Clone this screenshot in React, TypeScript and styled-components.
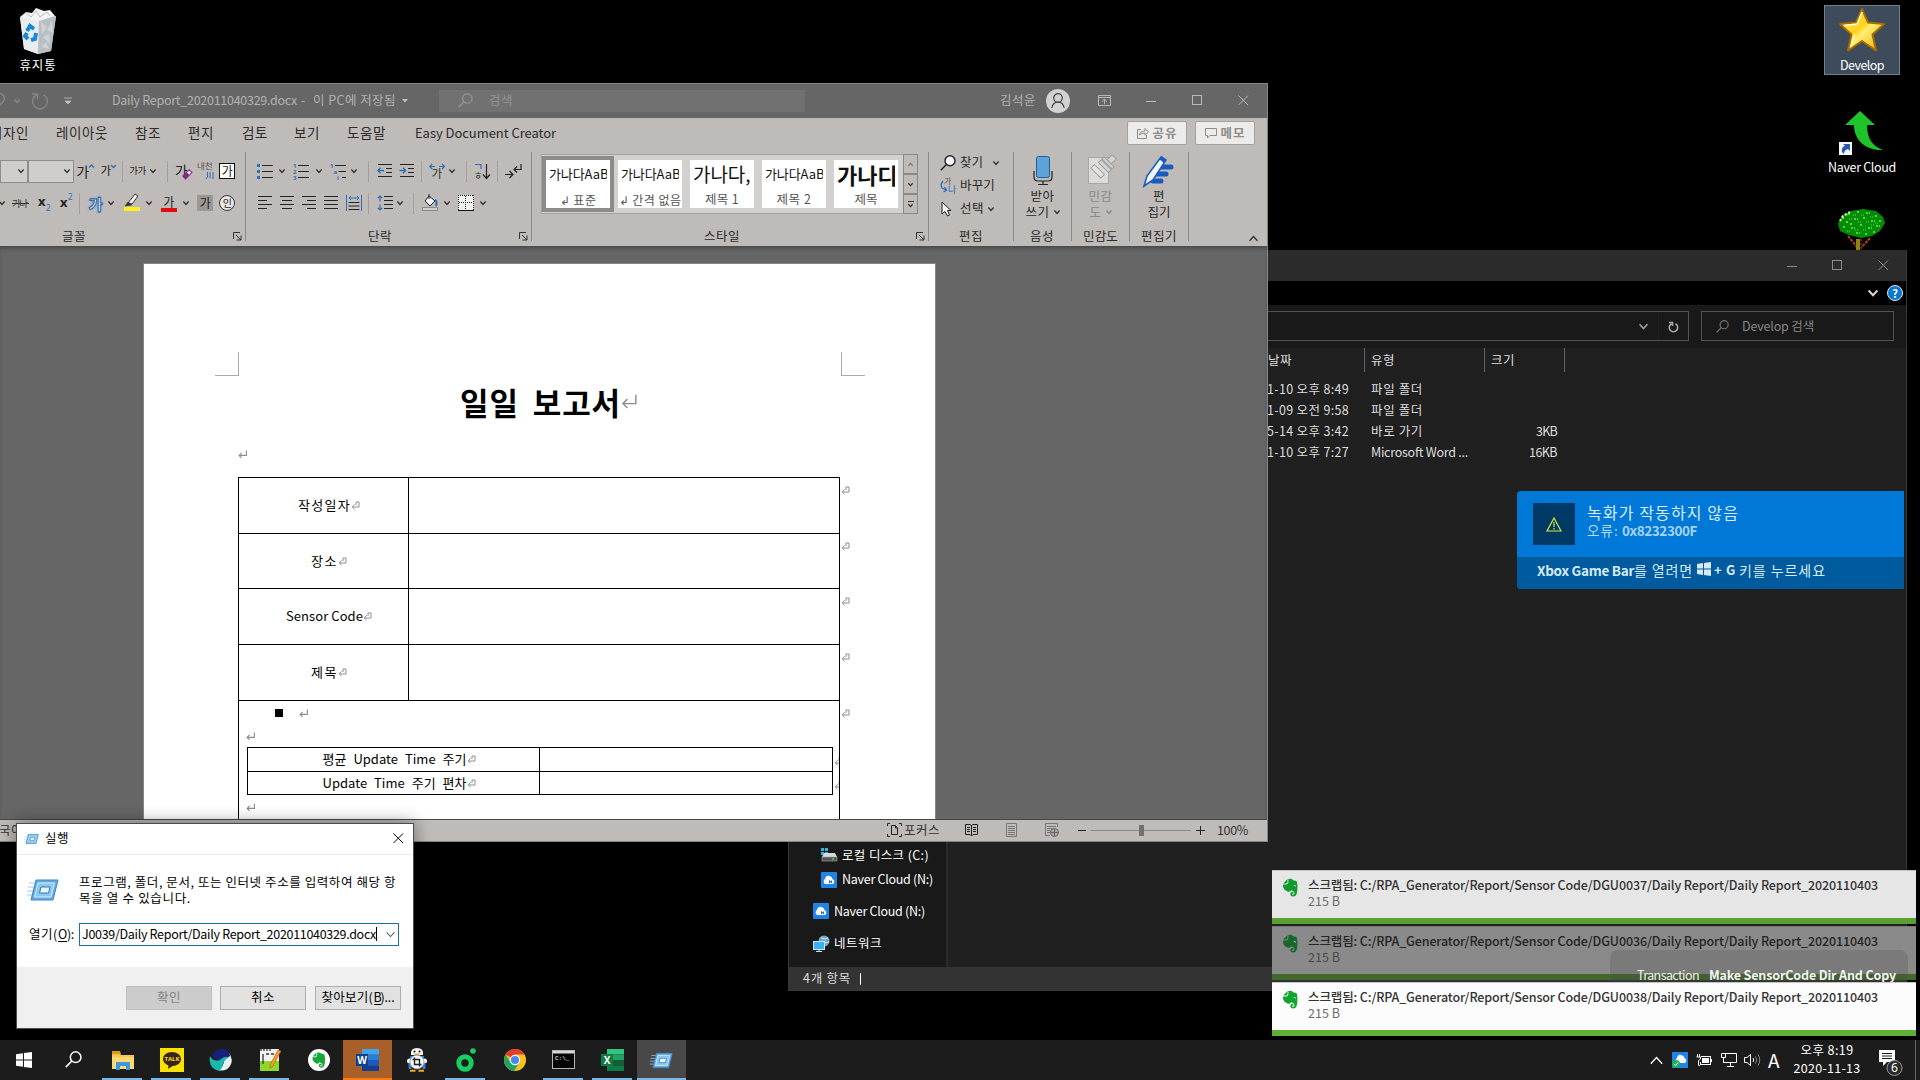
import React, { useLayoutEffect, useRef, useState } from "react";
import styled, { createGlobalStyle } from "styled-components";

const Global = createGlobalStyle`
  * { box-sizing: border-box; }
  body { margin: 0; background: #000; overflow: hidden; }
  svg { display: block; flex: none; overflow: visible; }
`;

/* ---------- text ---------- */

type TextProps = { $size?: number; $color?: string; $weight?: number; $w?: number; $gap?: number; $word?: number };

const Text = styled.span<TextProps>`
  display: block;
  flex: none;
  white-space: pre;
  line-height: 1.15;
  font-family: "Noto Sans CJK KR", "Noto Sans", sans-serif;
  font-size: ${(p) => p.$size ?? 12.5}px;
  font-weight: ${(p) => p.$weight ?? 400};
  color: ${(p) => p.$color ?? "inherit"};
  width: ${(p) => (p.$w ? `${p.$w}px` : "auto")};
  margin-left: ${(p) => p.$gap ?? 0}px;
  word-spacing: ${(p) => p.$word ?? 0}px;
`;

type LabelProps = { children: string; w?: number; size?: number; color?: string; bold?: boolean; medium?: boolean; gap?: number; word?: number };

/* A single line whose tracking is computed so that it fills the given width. */
function Label({ children, w, size, color, bold, medium, gap, word }: LabelProps) {
  const ref = useRef<HTMLSpanElement>(null);
  const [track, setTrack] = useState(0);
  useLayoutEffect(() => {
    if (!w || !ref.current) return;
    const range = document.createRange();
    range.selectNodeContents(ref.current);
    const natural = range.getBoundingClientRect().width;
    setTrack((w - natural) / Math.max(1, children.length));
  }, []);
  const weight = bold ? 700 : medium ? 500 : 400;
  return (
    <Text ref={ref} $w={w} $size={size} $color={color} $weight={weight} $gap={gap} $word={word} style={{ letterSpacing: track }}>
      {children}
    </Text>
  );
}

const Slot = styled.div<{ $w: number; $gap?: number; $lift?: number }>`
  width: ${(p) => p.$w}px;
  margin-left: ${(p) => p.$gap ?? 0}px;
  padding-bottom: ${(p) => p.$lift ?? 0}px;
  flex: none;
  display: flex;
  align-items: center;
  justify-content: center;
`;

/* ---------- desktop ---------- */

const Desktop = styled.div`
  position: relative;
  width: 1920px;
  height: 1080px;
  background: #000;
  overflow: hidden;
  font-family: "Noto Sans CJK KR", "Noto Sans", sans-serif;
`;

const Shortcut = styled.div<{ $x: number; $y: number; $selected?: boolean }>`
  position: absolute;
  left: ${(p) => p.$x}px;
  top: ${(p) => p.$y}px;
  width: 76px;
  height: 70px;
  display: flex;
  flex-direction: column;
  align-items: center;
  color: #fff;
  background: ${(p) => (p.$selected ? "#3d4b5b" : "transparent")};
  border: 1px ${(p) => (p.$selected ? "solid #75808c" : "solid transparent")};
`;
const ShortcutArt = styled.div`
  height: 50px;
  display: flex;
  align-items: flex-start;
  margin-bottom: 2px;
`;

const Bin = () => (
  <svg width="40" height="48" viewBox="0 -2 40 48">
    <path d="M2 9L38 8L33 43L20 46L6 41Z" fill="#d3d7da" />
    <path d="M2 9L21 12L20 46L6 41Z" fill="#e9ecee" />
    <path d="M21 12L38 8L33 43L20 46Z" fill="#b9bec2" />
    <path d="M23 14l6 5-5 7zM34 13l-5 9 6 3zM25 29l6-3 1 10zM23 39l5-5 3 7z" fill="#cfd3d6" />
    <path d="M2 9L8 4L14 5L18 0L26 3L32 2L37 8L21 13Z" fill="#f4f4f4" />
    <path d="M8 5l5 4 5-6 4 6 7-5 3 4" stroke="#b9bdc0" fill="none" />
    <g stroke="#1787d8" strokeWidth="4" fill="none">
      <path d="M9 23L12 18L16 21" />
      <path d="M18 25L17 31L13 32" />
      <path d="M10 31L7 28L9 25" />
    </g>
  </svg>
);

const StarArt = () => (
  <svg width="48" height="48" viewBox="-1 0 48 48">
    <defs>
      <linearGradient id="gold" x1="0" y1="0" x2="1" y2="1">
        <stop offset="0" stopColor="#fff27a" />
        <stop offset=".45" stopColor="#ffd21c" />
        <stop offset=".55" stopColor="#ffee70" />
        <stop offset="1" stopColor="#e9a500" />
      </linearGradient>
    </defs>
    <path d="M23 3L29 16.5L45 18L33.5 28.5L37 44.5L23 35L9 44.5L12.5 28.5L1 18L17 16.5Z" fill="url(#gold)" stroke="#a86c00" strokeWidth="2" strokeLinejoin="round" />
    <path d="M23 6L18 18L5 19.5M12 41l3.5-13" stroke="#fffbd0" fill="none" strokeWidth="1.5" />
  </svg>
);

const NaverArrow = () => (
  <svg width="46" height="48" viewBox="0 0 46 48">
    <path d="M21 3L36 17H28C28 30 33 38 44 42C28 43 15 33 15 17H6Z" fill="#1fc32a" />
    <rect x="0" y="34" width="13" height="13" fill="#f5f7fa" />
    <path d="M4 36H11V43L9 41Q5 42 5 46L3 44Q2 39 6 38Z" fill="#2a5ba8" />
  </svg>
);

const TreeArt = () => (
  <svg width="48" height="46" viewBox="0 0 48 46">
    <path d="M1 15L5 6L14 2L26 0L39 2L46 8L48 14L43 22L35 27L24 29L12 26L3 22Z" fill="#078a07" />
    <path d="M5 9h3M11 5h3M20 3h3M29 4h4M38 7h3M9 13h3M17 10h4M26 9h3M34 12h4M42 12h3M6 18h3M14 19h4M23 16h3M31 19h4M39 17h4M19 24h4M28 25h3M13 15h2M36 23h3" stroke="#35e635" strokeWidth="2" strokeDasharray="2 1" />
    <path d="M8 6h3M16 6h3M24 6h3M33 8h3M12 10h3M21 13h3M29 13h3M38 14h3M10 22h3M18 21h3M26 21h3M34 16h3" stroke="#1cc01c" strokeWidth="2" strokeDasharray="1 1" />
    <path d="M3 12L6 7L13 3" stroke="#f5f5c0" strokeWidth="2" strokeDasharray="2 2" fill="none" />
    <path d="M11 27L20 38M33 29L24 39" stroke="#a04a1a" strokeWidth="2" strokeDasharray="3 1" />
    <rect x="19" y="30" width="4" height="16" fill="#8a8410" />
    <path d="M24 30V46" stroke="#7b1616" strokeWidth="2" strokeDasharray="2 2" />
  </svg>
);

/* ---------- shared glyphs ---------- */

const Chevron = ({ c = "#333", s = 6, w = 1.4 }: { c?: string; s?: number; w?: number }) => (
  <svg width={s} height={s} viewBox="0 0 8 8">
    <path d="M0.5 2L4 5.8L7.5 2" fill="none" stroke={c} strokeWidth={(w * 8) / s} />
  </svg>
);
const ChevronUp = ({ c = "#333", s = 9, w = 1.4 }: { c?: string; s?: number; w?: number }) => (
  <svg width={s} height={s} viewBox="0 0 8 8">
    <path d="M0.5 6L4 2.2L7.5 6" fill="none" stroke={c} strokeWidth={(w * 8) / s} />
  </svg>
);
const Minimize = ({ c }: { c: string }) => (
  <svg width="10" height="10"><path d="M0 5.5H10" stroke={c} /></svg>
);
const Maximize = ({ c }: { c: string }) => (
  <svg width="11" height="11"><rect x=".5" y=".5" width="9" height="9" fill="none" stroke={c} /></svg>
);
const Close = ({ c }: { c: string }) => (
  <svg width="11" height="11"><path d="M.5 .5L10 10M10 .5L.5 10" stroke={c} /></svg>
);
const Lens = ({ c, s, fill = "none" }: { c: string; s: number; fill?: string }) => (
  <svg width={s} height={s} viewBox="0 0 16 16">
    <circle cx="10" cy="5.8" r="5" fill={fill} stroke={c} strokeWidth="1.4" />
    <path d="M6.4 9.4L.8 15.2" stroke={c} strokeWidth="1.5" />
  </svg>
);

/* ---------- Word ---------- */

const WordWindow = styled.div`
  position: absolute;
  left: 0;
  top: 83px;
  width: 1268px;
  height: 759px;
  display: flex;
  flex-direction: column;
  border-top: 1px solid #858585;
  border-right: 1px solid #858585;
  border-bottom: 1px solid #858585;
  background: #666;
  overflow: hidden;
`;
const TitleBar = styled.div`
  height: 34px;
  flex: none;
  display: flex;
  align-items: center;
  color: #b2b2b2;
  padding-bottom: 1px;
`;
const SearchBox = styled.div`
  width: 366px;
  height: 22px;
  margin-left: 31px;
  padding-left: 19px;
  display: flex;
  align-items: center;
  background: #717171;
  flex: none;
`;
const Avatar = styled.div`
  width: 24px;
  height: 24px;
  border-radius: 12px;
  background: #d2d2d2;
  margin-left: 10px;
  display: flex;
  align-items: center;
  justify-content: center;
  flex: none;
`;
const Tabs = styled.div`
  height: 30px;
  flex: none;
  display: flex;
  align-items: center;
  background: #bfbbb8;
  color: #2c2b2a;
`;
const TabButton = styled.div<{ $gap: number }>`
  width: 60px;
  height: 24px;
  margin: 0 0 0 ${(p) => p.$gap}px;
  border: 1px solid #a3a19f;
  border-radius: 2px;
  background: #ecebea;
  color: #8e8c8a;
  display: flex;
  align-items: center;
  justify-content: center;
  gap: 4px;
  flex: none;
`;
const Ribbon = styled.div`
  height: 98px;
  flex: none;
  display: flex;
  background: #bfbbb8;
  color: #2a2928;
`;
const Group = styled.div<{ $w: number }>`
  width: ${(p) => p.$w}px;
  flex: none;
  display: flex;
  flex-direction: column;
  padding-top: 7px;
`;
const GroupRule = styled.div`
  width: 1px;
  height: 89px;
  margin-top: 4px;
  background: #8b8987;
  flex: none;
`;
const ToolRow = styled.div`
  height: 32px;
  display: flex;
  align-items: center;
  flex: none;
`;
const GroupFoot = styled.div<{ $pad: number }>`
  height: 20px;
  margin-top: 7px;
  padding: 0 3px 0 ${(p) => p.$pad}px;
  display: flex;
  align-items: center;
  justify-content: space-between;
`;
const ToolRule = styled.div<{ $gap: number }>`
  width: 1px;
  height: 21px;
  margin-left: ${(p) => p.$gap}px;
  background: #a19f9c;
  flex: none;
`;
const Combo = styled.div<{ $w: number }>`
  width: ${(p) => p.$w}px;
  height: 23px;
  border: 1px solid #8f8d8b;
  background: #cfcecd;
  display: flex;
  align-items: center;
  justify-content: flex-end;
  padding-right: 3px;
  flex: none;
`;
const Glyph = styled.span<{ $size?: number; $color?: string; $bold?: boolean }>`
  font-size: ${(p) => p.$size ?? 14}px;
  line-height: 1;
  color: ${(p) => p.$color ?? "#222"};
  font-weight: ${(p) => (p.$bold ? 700 : 400)};
  white-space: nowrap;
  letter-spacing: -0.5px;
`;
const Boxed = styled.div<{ $round?: boolean; $fill: string; $line: string }>`
  width: 16px;
  height: 16px;
  border: 1px solid ${(p) => p.$line};
  border-radius: ${(p) => (p.$round ? "8px" : "0")};
  background: ${(p) => p.$fill};
  display: flex;
  align-items: center;
  justify-content: center;
  flex: none;
`;
const Swatch = styled.div<{ $c: string }>`
  display: flex;
  flex-direction: column;
  align-items: center;
  width: 16px;
  height: 18px;
  justify-content: flex-end;
  border-bottom: 4px solid ${(p) => p.$c};
`;
const Glow = styled(Glyph)`
  color: #eaf3fb;
  font-weight: 700;
  -webkit-text-stroke: 0.8px #1c5596;
  text-shadow: 0 0 2px #3f8ad6, 0 0 3px #3f8ad6;
`;

const Launcher = () => (
  <svg width="9" height="9"><path d="M.5 7V.5H7M3 3L8 8M8 3.5V8H3.5" fill="none" stroke="#333" /></svg>
);
const INK = "#222";
const BLUE = "#2e6db8";

const Lines = ({ rows }: { rows: [number, number][] }) => (
  <svg width="16" height="16">
    {rows.map(([a, b], i) => (
      <path key={i} d={`M${a} ${1.5 + i * 4}H${b}`} stroke={INK} />
    ))}
  </svg>
);
const ListIcon = ({ kind }: { kind: "dot" | "num" | "multi" }) => (
  <svg width="16" height="17" fontSize="6" fontFamily="Noto Sans" fill={BLUE} fontWeight="700">
    {kind === "dot" && [1, 7, 13].map((y) => <rect key={y} x="0" y={y} width="3" height="3" />)}
    {kind === "num" && ["1", "2", "3"].map((t, i) => <text key={t} x="0" y={5 + i * 6}>{t}</text>)}
    {kind === "multi" && ["1", "a", "i"].map((t, i) => <text key={t} x={i * 3.5} y={5 + i * 6}>{t}</text>)}
    {[2.5, 8.5, 14.5].map((y, i) => (
      <path key={y} d={`M${kind === "multi" ? 5 + i * 3.5 : 5} ${y}H16`} stroke={INK} />
    ))}
  </svg>
);
const Indent = ({ out }: { out?: boolean }) => (
  <svg width="16" height="15">
    <path d="M1 1.5H15M9 5.5H15M9 9.5H15M1 13.5H15" stroke={INK} />
    <path d={out ? "M7 7.5H.8M3.5 4.8L.8 7.5L3.5 10.2" : "M.5 7.5H6.7M4 4.8L6.7 7.5L4 10.2"} stroke={BLUE} fill="none" strokeWidth="1.3" />
  </svg>
);

const Gallery = styled.div`
  width: 362px;
  height: 60px;
  margin-left: 9px;
  display: flex;
  align-items: center;
  background: #d2d1d0;
  border: 1px solid #a5a3a1;
  border-right: 0;
  flex: none;
`;
const StyleTile = styled.div<{ $on?: boolean }>`
  width: 72px;
  height: 56px;
  flex: none;
  border: 4px solid ${(p) => (p.$on ? "#8d8b89" : "transparent")};
  background: #fff;
  background-clip: padding-box;
  display: flex;
  flex-direction: column;
  align-items: center;
  justify-content: space-between;
  overflow: hidden;
`;
const Sample = styled.div<{ $size: number; $bold?: boolean }>`
  height: 31px;
  width: 58px;
  overflow: hidden;
  white-space: nowrap;
  font-size: ${(p) => p.$size}px;
  font-weight: ${(p) => (p.$bold ? 700 : 400)};
  line-height: 28px;
  letter-spacing: -0.1px;
  color: #111;
`;
const StyleName = styled.div`
  height: 17px;
  display: flex;
  align-items: center;
  color: #555;
`;
const Scroller = styled.div`
  width: 15px;
  height: 60px;
  display: flex;
  flex-direction: column;
  flex: none;
`;
const ScrollCell = styled.div`
  flex: 1;
  border: 1px solid #8a8886;
  display: flex;
  flex-direction: column;
  align-items: center;
  justify-content: center;
`;
const GalleryRow = styled.div`
  height: 65px;
  margin-top: -1px;
  padding-bottom: 5px;
  display: flex;
  align-items: center;
  flex: none;
`;
const EditLine = styled.div`
  height: 23px;
  display: flex;
  align-items: center;
  padding-left: 11px;
  flex: none;
`;
const EditStack = styled.div`
  height: 64px;
  margin-top: -4px;
  margin-bottom: 4px;
  flex: none;
`;
const BigTool = styled.div<{ $dim?: boolean }>`
  height: 64px;
  padding-top: 1px;
  display: flex;
  flex-direction: column;
  align-items: center;
  flex: none;
  color: ${(p) => (p.$dim ? "#8b8987" : "#2a2928")};
`;
const BigArt = styled.div`
  height: 32px;
  display: flex;
  align-items: flex-start;
  flex: none;
`;
const BigLine = styled.div`
  height: 16px;
  display: flex;
  align-items: center;
  gap: 4px;
  flex: none;
`;
const Collapse = styled.div`
  margin-left: auto;
  padding: 86px 9px 0 0;
`;

/* document */
const Canvas = styled.div`
  flex: 1;
  min-height: 0;
  overflow: hidden;
  background: #666;
  box-shadow: inset 0 4px 4px -2px #444;
  padding: 17px 0 0 143px;
`;
const Page = styled.div`
  width: 793px;
  height: 900px;
  background: #fff;
  border: 1px solid #868686;
`;
const Corners = styled.div`
  display: flex;
  justify-content: space-between;
  padding: 88px 70px 0 71px;
`;
const Corner = styled.div<{ $right?: boolean }>`
  width: 24px;
  height: 24px;
  border-bottom: 1px solid #aaa;
  border-right: ${(p) => (p.$right ? "0" : "1px solid #aaa")};
  border-left: ${(p) => (p.$right ? "1px solid #aaa" : "0")};
`;
const TitleLine = styled.div`
  height: 54px;
  padding: 0 0 3px 316px;
  display: flex;
  align-items: center;
`;
const ParaLine = styled.div<{ $h: number; $pad: number; $drop?: number }>`
  height: ${(p) => p.$h}px;
  padding-left: ${(p) => p.$pad}px;
  padding-top: ${(p) => p.$drop ?? 0}px;
  display: flex;
  align-items: center;
`;
const FormRow = styled.div<{ $h: number; $pad?: number }>`
  height: ${(p) => p.$h}px;
  margin-left: ${(p) => p.$pad ?? 94}px;
  display: flex;
`;
const FormCell = styled.div<{ $w: number; $last?: boolean }>`
  width: ${(p) => p.$w}px;
  border-left: 1px solid #000;
  border-top: 1px solid #000;
  border-bottom: ${(p) => (p.$last ? "1px solid #000" : "0")};
  padding-left: 11px;
  display: flex;
  align-items: center;
  justify-content: center;
  flex: none;
`;
const RowEnd = styled.div<{ $top: number; $w?: number }>`
  border-left: 1px solid #000;
  width: ${(p) => p.$w ?? 20}px;
  overflow: hidden;
  padding: ${(p) => p.$top}px 0 0 1px;
`;
const FormBody = styled.div`
  width: 601px;
  height: 200px;
  border-left: 1px solid #000;
  border-top: 1px solid #000;
  flex: none;
`;
const Square = styled.div`
  width: 8px;
  height: 8px;
  background: #000;
  margin-right: 16px;
`;
const Return = ({ s = 9 }: { s?: number }) => (
  <svg width={s} height={s} viewBox="0 0 10 10">
    <path d="M9.3 .5V6H1.2M4 3.2L1.2 6L4 8.8" fill="none" stroke="#8c8c8c" strokeWidth={s > 12 ? 0.9 : 1.2} />
  </svg>
);
const CellMark = () => (
  <svg width="9" height="9" viewBox="0 0 9 9">
    <path d="M5 1H8V6H1.2M3.6 3.4L1.2 5.8L3.6 8.2M5 1V4" fill="none" stroke="#8e8e8e" />
  </svg>
);

const StatusBar = styled.div`
  height: 22px;
  flex: none;
  display: flex;
  align-items: center;
  background: #bfbbb8;
  border-top: 1px solid #484848;
  color: #333;
  padding-bottom: 1px;
`;
const ZoomTrack = styled.div`
  width: 100px;
  height: 11px;
  margin: 0 5px;
  display: flex;
  justify-content: center;
  background: linear-gradient(#8a8886, #8a8886) center / 100% 1px no-repeat;
`;
const ZoomThumb = styled.div`
  width: 5px;
  height: 11px;
  background: #737170;
`;

const formRows = [
  { name: "작성일자", w: 53, h: 56 },
  { name: "장소", w: 27, h: 55 },
  { name: "Sensor Code", w: 77, h: 56 },
  { name: "제목", w: 27, h: 56 },
];
const innerRows = ["평균 Update Time 주기", "Update Time 주기 편차"];

function Word() {
  return (
    <WordWindow>
      <TitleBar>
        <Slot $w={7}>
          <svg width="12" height="18"><path d="M-4 3C2 -2 9 4 5 10L-3 17" fill="none" stroke="#8a8a8a" strokeWidth="1.3" /></svg>
        </Slot>
        <Slot $w={8} $gap={6}><Chevron c="#8a8a8a" /></Slot>
        <Slot $w={18} $gap={10}>
          <svg width="18" height="18"><path d="M12.5 2.8A7.5 7.5 0 1 1 5.5 2.8M1 2H6.5V7.5" fill="none" stroke="#858585" strokeWidth="1.4" /></svg>
        </Slot>
        <Slot $w={10} $gap={14}>
          <svg width="8" height="8"><path d="M0 1H8M1 4L4 7L7 4Z" stroke="#c0c0c0" fill="#c0c0c0" strokeWidth=".8" /></svg>
        </Slot>
        <Label w={185} gap={39}>Daily Report_202011040329.docx</Label>
        <Label w={6} gap={4}>-</Label>
        <Label w={83} gap={6}>이 PC에 저장됨</Label>
        <Slot $w={7} $gap={5}><svg width="6" height="4"><path d="M0 0H6L3 3.5Z" fill="#c0c0c0" /></svg></Slot>
        <SearchBox>
          <Lens c="#939393" s={15} />
          <Label w={24} gap={16} color="#949494">검색</Label>
        </SearchBox>
        <Label w={36} gap={195}>김석윤</Label>
        <Avatar>
          <svg width="14" height="16"><circle cx="7" cy="5" r="4.3" fill="none" stroke="#444" strokeWidth="1.2" /><path d="M.8 15Q2 9.2 7 9.2T13.2 15" fill="none" stroke="#444" strokeWidth="1.2" /></svg>
        </Avatar>
        <Slot $w={13} $gap={28}>
          <svg width="13" height="11"><path d="M.5 .5H12.5V10.5H.5ZM.5 2.5H12.5M6.5 9V4.5M4 6.5L6.5 4.2L9 6.5" fill="none" stroke="#b8b8b8" /></svg>
        </Slot>
        <Slot $w={10} $gap={35}><Minimize c="#bbb" /></Slot>
        <Slot $w={10} $gap={36}><Maximize c="#bbb" /></Slot>
        <Slot $w={10} $gap={36}><Close c="#bbb" /></Slot>
      </TitleBar>
      <Tabs>
        <Label w={39} gap={-10} size={13.5}>디자인</Label>
        <Label w={52} gap={27} size={13.5}>레이아웃</Label>
        <Label w={26} gap={27} size={13.5}>참조</Label>
        <Label w={26} gap={27} size={13.5}>편지</Label>
        <Label w={26} gap={28} size={13.5}>검토</Label>
        <Label w={26} gap={26} size={13.5}>보기</Label>
        <Label w={39} gap={27} size={13.5}>도움말</Label>
        <Label w={141} gap={29} size={13}>Easy Document Creator</Label>
        <TabButton $gap={571}>
          <svg width="12" height="12"><path d="M4 2.5H.5V11.5H9.5V8M2.5 8Q3 4 8 4V1.5L11.5 5L8 8.2V6Q4.5 6 2.5 8" fill="none" stroke="#8e8c8a" /></svg>
          <Label w={25} bold>공유</Label>
        </TabButton>
        <TabButton $gap={8}>
          <svg width="12" height="11"><path d="M.5 .5H11.5V7.5H5L2.5 10V7.5H.5Z" fill="none" stroke="#8e8c8a" /></svg>
          <Label w={25} bold>메모</Label>
        </TabButton>
      </Tabs>
      <Ribbon>
        <Group $w={245}>
          <ToolRow>
            <Combo $w={28}><Chevron /></Combo>
            <Combo $w={46}><Chevron /></Combo>
            <Slot $w={18} $gap={2} $lift={1}>
              <Glyph $size={14}>가</Glyph>
              <svg width="5" height="14"><path d="M0 3.5L2.5 1L5 3.5" fill="none" stroke={BLUE} strokeWidth="1.3" /></svg>
            </Slot>
            <Slot $w={16} $gap={6}>
              <Glyph $size={11.5}>가</Glyph>
              <svg width="5" height="14"><path d="M0 1L2.5 3.5L5 1" fill="none" stroke={BLUE} strokeWidth="1.3" /></svg>
            </Slot>
            <ToolRule $gap={6} />
            <Slot $w={17} $gap={6}><Glyph $size={9.5}>가가</Glyph></Slot>
            <Slot $w={8} $gap={3}><Chevron /></Slot>
            <ToolRule $gap={10} />
            <Slot $w={18} $gap={6} $lift={2}>
              <Glyph $size={14}>가</Glyph>
              <svg width="4" height="16"><g transform="rotate(-45 0 12)"><rect x="-5" y="10" width="10" height="5" fill="#7c2b86" /><rect x="1" y="11" width="3" height="3" fill="#f2e4f4" /></g></svg>
            </Slot>
            <Slot $w={18} $gap={4}>
              <svg width="17" height="18">
                <text x="0" y="7" fontSize="8.5" fill="#555" fontFamily="Noto Sans CJK KR">내천</text>
                <path d="M10.5 10V15L9 17M13 10V16.5M16 10V17" stroke={BLUE} fill="none" />
              </svg>
            </Slot>
            <Slot $w={16} $gap={5}><Boxed $fill="#fff" $line="#111"><Glyph $size={12}>가</Glyph></Boxed></Slot>
          </ToolRow>
          <ToolRow>
            <Slot $w={4}><Chevron /></Slot>
            <Slot $w={18} $gap={7}>
              <svg width="17" height="12"><text x="0" y="10" fontSize="9.5" fill="#333" fontFamily="Noto Sans CJK KR" textLength="16">가나</text><path d="M0 6.5H17" stroke="#333" /></svg>
            </Slot>
            <Slot $w={14} $gap={8}>
              <svg width="13" height="18"><text x="0" y="12" fontSize="13" fontWeight="700" fill="#222" fontFamily="Noto Sans">x</text><text x="8" y="17" fontSize="8" fill={BLUE} fontFamily="Noto Sans">2</text></svg>
            </Slot>
            <Slot $w={12} $gap={9}>
              <svg width="12" height="18"><text x="0" y="13" fontSize="13" fontWeight="700" fill="#222" fontFamily="Noto Sans">x</text><text x="8" y="6" fontSize="8" fill={BLUE} fontFamily="Noto Sans">2</text></svg>
            </Slot>
            <ToolRule $gap={7} />
            <Slot $w={17} $gap={7}><Glow $size={15}>가</Glow></Slot>
            <Slot $w={8} $gap={3}><Chevron /></Slot>
            <Slot $w={17} $gap={8}>
              <svg width="16" height="18"><path d="M4 9L11 0L14 2L8 10Z" fill="#f4f4f2" stroke="#333" /><path d="M4 8L8 11L1 12Z" fill="#333" stroke="#333" strokeWidth=".6" /><rect x="0" y="13" width="16" height="4" fill="#fdf31a" /></svg>
            </Slot>
            <Slot $w={8} $gap={5}><Chevron /></Slot>
            <Slot $w={17} $gap={7} $lift={1}><Swatch $c="#e30b0b"><Glyph $size={12}>가</Glyph></Swatch></Slot>
            <Slot $w={8} $gap={5}><Chevron /></Slot>
            <Slot $w={16} $gap={7}><Boxed $fill="#9a9896" $line="#9a9896"><Glyph $size={12}>가</Glyph></Boxed></Slot>
            <Slot $w={16} $gap={6}><Boxed $round $fill="#e8e8e8" $line="#333"><Glyph $size={10}>인</Glyph></Boxed></Slot>
          </ToolRow>
          <GroupFoot $pad={62}><Label w={24}>글꼴</Label><Launcher /></GroupFoot>
        </Group>
        <GroupRule />
        <Group $w={285}>
          <ToolRow>
            <Slot $w={16} $gap={11}><ListIcon kind="dot" /></Slot>
            <Slot $w={8} $gap={5}><Chevron /></Slot>
            <Slot $w={16} $gap={7}><ListIcon kind="num" /></Slot>
            <Slot $w={8} $gap={6}><Chevron /></Slot>
            <Slot $w={16} $gap={7}><ListIcon kind="multi" /></Slot>
            <Slot $w={8} $gap={4}><Chevron /></Slot>
            <ToolRule $gap={10} />
            <Slot $w={16} $gap={8} $lift={1}><Indent out /></Slot>
            <Slot $w={16} $gap={6} $lift={1}><Indent /></Slot>
            <ToolRule $gap={6} />
            <Slot $w={17} $gap={7}>
              <svg width="17" height="17"><path d="M1 3.5H6M3.2 1L.8 3.5L3.2 6M10 3.5H15.5M13 1L15.5 3.5L13 6" fill="none" stroke={BLUE} strokeWidth="1.2" /><text x="2.5" y="15" fontSize="11.5" fill="#333" fontFamily="Noto Sans CJK KR">가</text></svg>
            </Slot>
            <Slot $w={8} $gap={2}><Chevron /></Slot>
            <ToolRule $gap={10} />
            <Slot $w={16} $gap={7}>
              <svg width="16" height="17"><path d="M1 1.5H7V6" fill="none" stroke={BLUE} strokeWidth="1.2" /><text x="0" y="16" fontSize="9" fill="#222" fontFamily="Noto Sans CJK KR">ㅎ</text><path d="M12.5 1V15M9 11.5L12.5 15.5L16 11.5" fill="none" stroke={INK} strokeWidth="1.2" /></svg>
            </Slot>
            <ToolRule $gap={7} />
            <Slot $w={18} $gap={6}>
              <svg width="18" height="17"><path d="M1 11.5H9M5.5 8L9 11.5L5.5 15M17 1V6.5H10M13 3.5L10 6.5L13 9.5" fill="none" stroke={INK} strokeWidth="1.2" /></svg>
            </Slot>
          </ToolRow>
          <ToolRow>
            <Slot $w={16} $gap={11}><Lines rows={[[1, 15], [1, 10], [1, 15], [1, 10]]} /></Slot>
            <Slot $w={16} $gap={6}><Lines rows={[[1, 15], [3, 13], [1, 15], [3, 13]]} /></Slot>
            <Slot $w={16} $gap={6}><Lines rows={[[1, 15], [6, 15], [1, 15], [6, 15]]} /></Slot>
            <Slot $w={16} $gap={6}><Lines rows={[[1, 15], [1, 15], [1, 15], [1, 15]]} /></Slot>
            <Slot $w={17} $gap={6}>
              <svg width="16" height="16"><path d="M.5 0V16M15.5 0V16M3 3H13M5 1L3 3L5 5M11 1L13 3L11 5" stroke={BLUE} fill="none" /><path d="M2.5 7.5H13.5M2.5 11H13.5M2.5 14.5H13.5" stroke={INK} /></svg>
            </Slot>
            <ToolRule $gap={6} />
            <Slot $w={17} $gap={7}>
              <svg width="16" height="16"><path d="M3 1V6.5M.8 3.2L3 1L5.2 3.2M3 15V9.5M.8 12.8L3 15L5.2 12.8" stroke={BLUE} fill="none" strokeWidth="1.2" /><path d="M7 1.5H16M7 5.5H16M7 9.5H16M7 13.5H16" stroke={INK} /></svg>
            </Slot>
            <Slot $w={8} $gap={3}><Chevron /></Slot>
            <ToolRule $gap={9} />
            <Slot $w={17} $gap={7} $lift={1}>
              <svg width="16" height="17"><path d="M3 7L7 2L13 7L8 12Z" fill="#f2f2f2" stroke="#222" /><path d="M7 5V0" stroke="#222" /><path d="M13 6Q15.5 7 14 12" stroke={BLUE} strokeWidth="2" fill="none" /><rect x=".5" y="13.5" width="15" height="3" fill="#cfcecd" stroke="#8b8987" /></svg>
            </Slot>
            <Slot $w={8} $gap={5}><Chevron /></Slot>
            <Slot $w={16} $gap={7} $lift={1}>
              <svg width="16" height="16"><rect width="16" height="16" fill="#f0f0ef" /><path d="M.5 0V15M15.5 0V15M0 .5H16M7.5 1V15M1 7.5H15" stroke="#222" strokeDasharray="1 1" /><path d="M0 15.5H16" stroke="#111" /></svg>
            </Slot>
            <Slot $w={8} $gap={5}><Chevron /></Slot>
          </ToolRow>
          <GroupFoot $pad={122}><Label w={24}>단락</Label><Launcher /></GroupFoot>
        </Group>
        <GroupRule />
        <Group $w={396}>
          <GalleryRow>
            <Gallery>
              <StyleTile $on><Sample $size={13}>가나다AaBb</Sample><StyleName><Label w={37} size={12}>↲ 표준</Label></StyleName></StyleTile>
              <StyleTile><Sample $size={13}>가나다AaBb</Sample><StyleName><Label w={63} size={12}>↲ 간격 없음</Label></StyleName></StyleTile>
              <StyleTile><Sample $size={19}>가나다,</Sample><StyleName><Label w={34}>제목 1</Label></StyleName></StyleTile>
              <StyleTile><Sample $size={13}>가나다AaBb</Sample><StyleName><Label w={35}>제목 2</Label></StyleName></StyleTile>
              <StyleTile><Sample $size={22} $bold>가나디</Sample><StyleName><Label w={23}>제목</Label></StyleName></StyleTile>
            </Gallery>
            <Scroller>
              <ScrollCell><ChevronUp s={5} c="#777" w={1.2} /></ScrollCell>
              <ScrollCell><Chevron s={5} w={1.3} /></ScrollCell>
              <ScrollCell><svg width="6" height="2"><path d="M0 .5H6" stroke="#333" /></svg><Chevron s={5} w={1.3} /></ScrollCell>
            </Scroller>
          </GalleryRow>
          <GroupFoot $pad={172}><Label w={36}>스타일</Label><Launcher /></GroupFoot>
        </Group>
        <GroupRule />
        <Group $w={84}>
          <EditStack>
            <EditLine>
              <Lens c="#222" s={16} fill="#f2f6fa" /><Label w={23} gap={4}>찾기</Label>
              <Slot $w={8} $gap={9}><Chevron /></Slot>
            </EditLine>
            <EditLine>
              <svg width="16" height="17" fontFamily="Noto Sans CJK KR"><text x="4" y="7" fontSize="8" fill="#555">가</text><text x="8" y="16" fontSize="9" fill={BLUE}>나</text><path d="M3 4Q0 8 2 11L6 13M3.5 15L6.5 13L4.5 10" fill="none" stroke={BLUE} strokeWidth="1.3" /></svg>
              <Label w={35} gap={4}>바꾸기</Label>
            </EditLine>
            <EditLine>
              <svg width="16" height="16"><path d="M2 1V13L5 10.5L7.5 15L9.5 14L7.5 9.5H11Z" fill="#f4f4f4" stroke="#222" /></svg>
              <Label w={24} gap={4}>선택</Label>
              <Slot $w={8} $gap={3}><Chevron /></Slot>
            </EditLine>
          </EditStack>
          <GroupFoot $pad={30}><Label w={24}>편집</Label></GroupFoot>
        </Group>
        <GroupRule />
        <Group $w={57}>
          <BigTool>
            <BigArt><svg width="20" height="29"><rect x="3.5" y=".5" width="13" height="21" rx="2" fill="#5fa2d8" stroke="#1d5da3" /><path d="M1 15V21Q1 25 5 25H15Q19 25 19 21V15M10 25V28M5 28.5H15" fill="none" stroke="#222" strokeWidth="1.2" /></svg></BigArt>
            <BigLine><Label w={24}>받아</Label></BigLine>
            <BigLine><Label w={24}>쓰기</Label><Chevron /></BigLine>
          </BigTool>
          <GroupFoot $pad={16}><Label w={24}>음성</Label></GroupFoot>
        </Group>
        <GroupRule />
        <Group $w={57}>
          <BigTool $dim>
            <BigArt><svg width="26" height="29"><rect x=".5" y="1.5" width="20" height="26" fill="#dcdbda" stroke="#a9a7a5" /><g transform="rotate(45 19 8)" fill="#d5d4d3" stroke="#a09e9c"><rect x="16" y="-2" width="6" height="7" /><rect x="12" y="5" width="14" height="3" /><rect x="12" y="9" width="14" height="4" /></g><rect x="3" y="13" width="14" height="5" transform="rotate(45 10 15)" fill="#e6e5e4" stroke="#a09e9c" /></svg></BigArt>
            <BigLine><Label w={24}>민감</Label></BigLine>
            <BigLine><Label w={12}>도</Label><Chevron c="#8b8987" /></BigLine>
          </BigTool>
          <GroupFoot $pad={11}><Label w={35}>민감도</Label></GroupFoot>
        </Group>
        <GroupRule />
        <Group $w={58}>
          <BigTool>
            <BigArt><svg width="33" height="32"><path d="M16 11H28M12 18H23M10 25H18" stroke="#1a5bc0" strokeWidth="5" strokeLinecap="round" /><path d="M1 30L4 20L18 1L23 4L10 24Z" fill="#f3f7fc" stroke="#1a5bc0" strokeWidth="1.6" /><path d="M16 3L21 7L23 4L19 0Z" fill="#1a5bc0" /></svg></BigArt>
            <BigLine><Label w={12}>편</Label></BigLine>
            <BigLine><Label w={23}>집기</Label></BigLine>
          </BigTool>
          <GroupFoot $pad={11}><Label w={36}>편집기</Label></GroupFoot>
        </Group>
        <GroupRule />
        <Collapse><ChevronUp s={9} /></Collapse>
      </Ribbon>
      <Canvas>
        <Page>
          <Corners><Corner /><Corner $right /></Corners>
          <TitleLine>
            <Label w={161} size={31} bold word={6} color="#000">일일 보고서</Label>
            <Return s={16} />
          </TitleLine>
          <ParaLine $h={47} $pad={94} $drop={2}><Return /></ParaLine>
          {formRows.map((r) => (
            <FormRow key={r.name} $h={r.h}>
              <FormCell $w={170}><Label w={r.w} size={13} color="#000">{r.name}</Label><CellMark /></FormCell>
              <FormCell $w={431} />
              <RowEnd $top={9}><CellMark /></RowEnd>
            </FormRow>
          ))}
          <FormRow $h={200}>
            <FormBody>
              <ParaLine $h={24} $pad={36}><Square /><Return /></ParaLine>
              <ParaLine $h={22} $pad={7}><Return /></ParaLine>
              {innerRows.map((name, i) => (
                <FormRow key={name} $h={24} $pad={8}>
                  <FormCell $w={292} $last={i === 1}><Label w={144} size={13} word={4} color="#000">{name}</Label><CellMark /></FormCell>
                  <FormCell $w={293} $last={i === 1} />
                  <RowEnd $top={10} $w={7}><CellMark /></RowEnd>
                </FormRow>
              ))}
              <ParaLine $h={25} $pad={7}><Return /></ParaLine>
            </FormBody>
            <RowEnd $top={9}><CellMark /></RowEnd>
          </FormRow>
        </Page>
      </Canvas>
      <StatusBar>
        <Label w={24} gap={-1}>국어</Label>
        <Slot $w={15} $gap={864}>
          <svg width="15" height="14"><path d="M3 .5H.5V3M12 .5H14.5V3M.5 11V13.5H3M14.5 11V13.5H12M4.5 2.5H8.5L10.5 5V11.5H4.5ZM8.5 2.5V5H10.5" fill="none" stroke="#222" /></svg>
        </Slot>
        <Label w={36} gap={2}>포커스</Label>
        <Slot $w={14} $gap={24}>
          <svg width="13" height="14"><path d="M6.5 2V13M.5 1.5H5L6.5 2.5L8 1.5H12.5V11.5H8L6.5 13L5 11.5H.5ZM2 4.5H5M2 6.5H5M2 8.5H5M8 4.5H11M8 6.5H11M8 8.5H11" fill="none" stroke="#222" /></svg>
        </Slot>
        <Slot $w={12} $gap={27}>
          <svg width="11" height="14"><path d="M.5 .5H10.5V13.5H.5ZM2 3.5H9M2 5.5H9M2 7.5H9M2 9.5H9M2 11.5H9" fill="none" stroke="#777" /></svg>
        </Slot>
        <Slot $w={15} $gap={27}>
          <svg width="14" height="14"><path d="M12.5 4V.5H.5V12.5H5M2 3.5H11M2 5.5H7M2 7.5H5M2 9.5H5" fill="none" stroke="#777" /><circle cx="9.5" cy="9.5" r="4" fill="#aaa8a6" stroke="#666" /><path d="M5.5 9.5H13.5M9.5 5.5V13.5" stroke="#666" /></svg>
        </Slot>
        <Slot $w={9} $gap={18}><svg width="8" height="9"><path d="M0 4.5H8" stroke="#222" /></svg></Slot>
        <ZoomTrack><ZoomThumb /></ZoomTrack>
        <Slot $w={9}><svg width="9" height="9"><path d="M0 4.5H9M4.5 0V9" stroke="#222" /></svg></Slot>
        <Label w={31} gap={12}>100%</Label>
      </StatusBar>
    </WordWindow>
  );
}

/* ---------- Explorer ---------- */

const Explorer = styled.div`
  position: absolute;
  left: 788px;
  top: 250px;
  width: 1119px;
  height: 741px;
  background: #202020;
  border: 1px solid #383838;
  border-top-color: #2b2b2b;
  color: #dedede;
  display: flex;
  flex-direction: column;
`;
const ExTitle = styled.div`
  height: 30px;
  background: #2b2b2b;
  display: flex;
  align-items: center;
  justify-content: flex-end;
  padding: 0 17px 1px 0;
  flex: none;
`;
const ExMenu = styled.div`
  height: 24px;
  background: #000;
  display: flex;
  align-items: center;
  justify-content: flex-end;
  gap: 9px;
  padding-right: 3px;
  flex: none;
`;
const Help = styled.div`
  width: 16px;
  height: 16px;
  border: 1px solid #dbe9f5;
  border-radius: 8px;
  background: #0a78d0;
  color: #fff;
  font-size: 11px;
  font-weight: 700;
  line-height: 14px;
  text-align: center;
`;
const ExNav = styled.div`
  height: 43px;
  background: #191919;
  display: flex;
  align-items: center;
  justify-content: flex-end;
  padding: 0 12px 1px 0;
  gap: 12px;
  flex: none;
`;
const Address = styled.div`
  width: 700px;
  height: 30px;
  border: 1px solid #535353;
  display: flex;
  align-items: center;
  justify-content: flex-end;
`;
const AddressButton = styled.div<{ $line?: boolean }>`
  width: 30px;
  height: 28px;
  padding-top: 1px;
  border-left: 1px solid ${(p) => (p.$line ? "#202020" : "transparent")};
  display: flex;
  align-items: center;
  justify-content: center;
`;
const ExSearch = styled.div`
  width: 193px;
  height: 30px;
  border: 1px solid #535353;
  padding-left: 14px;
  display: flex;
  align-items: center;
  color: #868686;
`;
const ExBody = styled.div`
  flex: 1;
  min-height: 0;
  display: flex;
`;
const Tree = styled.div`
  width: 159px;
  background: #191919;
  border-right: 2px solid #2b2b2b;
  padding-top: 494px;
  flex: none;
`;
const TreeRow = styled.div<{ $h: number; $pad: number }>`
  height: ${(p) => p.$h}px;
  padding-left: ${(p) => p.$pad}px;
  display: flex;
  align-items: center;
`;
const Files = styled.div`
  flex: 1;
  padding-left: 320px;
`;
const HeadRow = styled.div`
  height: 24px;
  display: flex;
  align-items: center;
  margin-bottom: 7px;
`;
const HeadCell = styled.div<{ $w: number; $pad: number }>`
  width: ${(p) => p.$w}px;
  height: 24px;
  padding-left: ${(p) => p.$pad}px;
  border-right: 1px solid #636363;
  display: flex;
  align-items: center;
  flex: none;
`;
const FileRow = styled.div`
  height: 21px;
  display: flex;
  align-items: center;
`;
const FileType = styled.div`
  width: 120px;
  margin-left: 22px;
`;
const FileSize = styled.div`
  width: 66px;
  display: flex;
  justify-content: flex-end;
`;
const ExStatus = styled.div`
  height: 23px;
  background: #333;
  display: flex;
  align-items: center;
  padding-left: 14px;
  flex: none;
`;
const Caret = styled.div<{ $h: number; $gap: number; $c: string }>`
  width: 1px;
  height: ${(p) => p.$h}px;
  margin-left: ${(p) => p.$gap}px;
  background: ${(p) => p.$c};
  flex: none;
`;

const CloudIcon = () => (
  <svg width="16" height="16">
    <rect width="16" height="16" rx="1" fill="#1f83e8" />
    <path d="M4 12A3 3 0 0 1 4 7Q5 3 8.5 4Q11 4.5 11.5 7Q14 8 13 11L12 12Z" fill="#fff" />
    <path d="M8.5 11V8.5L10.5 11V8.5" stroke="#1f6ad0" fill="none" />
  </svg>
);
const DiskIcon = () => (
  <svg width="16" height="14"><path d="M0 0H3V3H0ZM4 0H7V3H4ZM0 4H3V7H0ZM4 4H7V7H4Z" fill="#2cb3e8" /><path d="M3 5H14L16 9H1Z" fill="#d8d8d8" /><rect x="1" y="9" width="15" height="4" fill="#555" stroke="#aaa" strokeWidth=".6" /><rect x="11" y="10.5" width="2" height="1.2" fill="#3ef03e" /></svg>
);
const NetIcon = () => (
  <svg width="17" height="17"><circle cx="11" cy="6" r="5.5" fill="#6fa8c8" /><path d="M8 3Q12 5 15 3M7 7Q11 9 16 7" stroke="#d2e8f2" fill="none" /><rect x=".5" y="6.5" width="11" height="8" fill="#3cb0f4" stroke="#cbe6f6" /><path d="M3 16.5H9M6 14V17" stroke="#cbe6f6" /></svg>
);

const files = [
  { date: "1-10 오후 8:49", type: "파일 폴더", tw: 52, size: "", sw: 0 },
  { date: "1-09 오전 9:58", type: "파일 폴더", tw: 52, size: "", sw: 0 },
  { date: "5-14 오후 3:42", type: "바로 가기", tw: 52, size: "3KB", sw: 21 },
  { date: "1-10 오후 7:27", type: "Microsoft Word ...", tw: 97, size: "16KB", sw: 28 },
];

function FileExplorer() {
  return (
    <Explorer>
      <ExTitle>
        <Slot $w={11}><Minimize c="#8c8c8c" /></Slot>
        <Slot $w={11} $gap={35}><Maximize c="#8c8c8c" /></Slot>
        <Slot $w={11} $gap={35}><Close c="#8c8c8c" /></Slot>
      </ExTitle>
      <ExMenu>
        <Chevron c="#d8d8d8" s={10} w={2} />
        <Help>?</Help>
      </ExMenu>
      <ExNav>
        <Address>
          <AddressButton><Chevron c="#9a9a9a" s={9} w={1.8} /></AddressButton>
          <AddressButton $line>
            <svg width="11" height="12"><path d="M7.5 2.8A4.2 4.2 0 1 1 3.5 2.8M1 1.5H4.5V5" fill="none" stroke="#a8a8a8" strokeWidth="1.6" /></svg>
          </AddressButton>
        </Address>
        <ExSearch><Lens c="#777" s={13} /><Label w={72} gap={13}>Develop 검색</Label></ExSearch>
      </ExNav>
      <ExBody>
        <Tree>
          <TreeRow $h={26} $pad={32}><DiskIcon /><Label w={87} gap={5} color="#fff">로컬 디스크 (C:)</Label></TreeRow>
          <TreeRow $h={23} $pad={32}><CloudIcon /><Label w={91} gap={5} color="#fff">Naver Cloud (N:)</Label></TreeRow>
          <TreeRow $h={40} $pad={24}><CloudIcon /><Label w={91} gap={5} color="#fff">Naver Cloud (N:)</Label></TreeRow>
          <TreeRow $h={24} $pad={24}><NetIcon /><Label w={48} gap={4} color="#fff">네트워크</Label></TreeRow>
        </Tree>
        <Files>
          <HeadRow>
            <HeadCell $w={97} $pad={0}><Label w={24}>날짜</Label></HeadCell>
            <HeadCell $w={120} $pad={6}><Label w={24}>유형</Label></HeadCell>
            <HeadCell $w={80} $pad={6}><Label w={24}>크기</Label></HeadCell>
          </HeadRow>
          {files.map((f) => (
            <FileRow key={f.date}>
              <Label w={82} gap={-1}>{f.date}</Label>
              <FileType><Label w={f.tw}>{f.type}</Label></FileType>
              <FileSize>{f.size ? <Label w={f.sw}>{f.size}</Label> : null}</FileSize>
            </FileRow>
          ))}
        </Files>
      </ExBody>
      <ExStatus><Label w={48}>4개 항목</Label><Caret $h={12} $gap={9} $c="#fff" /></ExStatus>
    </Explorer>
  );
}

/* ---------- Run dialog ---------- */

const Dialog = styled.div`
  position: absolute;
  left: 16px;
  top: 823px;
  width: 398px;
  height: 206px;
  background: #fff;
  border: 1px solid #4c4c4c;
  box-shadow: 0 0 16px rgba(0, 0, 0, 0.45);
  color: #000;
  display: flex;
  flex-direction: column;
`;
const DialogTitle = styled.div`
  height: 31px;
  border-bottom: 1px solid #ececec;
  display: flex;
  align-items: center;
  padding: 0 0 1px 7px;
  flex: none;
`;
const Prompt = styled.div`
  display: flex;
  align-items: center;
  padding: 2px 0 0 10px;
  height: 68px;
  flex: none;
`;
const PromptLines = styled.div`
  margin: 0 0 0 20px;
`;
const PromptLine = styled.div`
  height: 15.5px;
  display: flex;
  align-items: center;
`;
const OpenRow = styled.div`
  height: 23px;
  display: flex;
  align-items: center;
  padding-left: 12px;
  flex: none;
`;
const Field = styled.div`
  width: 320px;
  height: 23px;
  border: 1px solid #1a6fae;
  margin-left: 5px;
  padding: 0 0 1px 2px;
  display: flex;
  align-items: center;
`;
const DialogFoot = styled.div`
  margin-top: auto;
  height: 61px;
  background: #f0f0f0;
  display: flex;
  justify-content: flex-end;
  align-items: center;
  gap: 8px;
  padding: 0 12px 0 0;
  flex: none;
`;
const Push = styled.div<{ $off?: boolean; $end?: boolean }>`
  width: 86px;
  height: 24px;
  margin-left: ${(p) => (p.$end ? 1 : 0)}px;
  border: 1px solid ${(p) => (p.$off ? "#bfbfbf" : "#adadad")};
  background: ${(p) => (p.$off ? "#ccc" : "#e1e1e1")};
  color: ${(p) => (p.$off ? "#838383" : "#000")};
  display: flex;
  align-items: center;
  justify-content: center;
`;
const Under = styled.div`
  border-bottom: 1px solid currentColor;
  line-height: 1;
`;

const RunIcon = ({ w, h }: { w: number; h: number }) => (
  <svg width={w} height={h} viewBox="0 0 32 22">
    <path d="M2 4H9M1 8H8M0 12H7M0 16H6" stroke="#a6cbe8" />
    <path d="M9 1H31L26 21H4Z" fill="#64ace2" stroke="#3c86c2" />
    <path d="M11 4H27.5L24 18H7.5Z" fill="#8cc7f0" stroke="#d9effc" />
    <path d="M14 8H23L21.5 14H12.5Z" fill="#e7f5fd" stroke="#3478b4" />
  </svg>
);

function RunDialog() {
  return (
    <Dialog>
      <DialogTitle>
        <RunIcon w={15} h={12} />
        <Label w={24} gap={6}>실행</Label>
        <Slot $w={12} $gap={323}><Close c="#000" /></Slot>
      </DialogTitle>
      <Prompt>
        <RunIcon w={32} h={22} />
        <PromptLines>
          <PromptLine><Label w={317}>프로그램, 폴더, 문서, 또는 인터넷 주소를 입력하여 해당 항</Label></PromptLine>
          <PromptLine><Label w={112}>목을 열 수 있습니다.</Label></PromptLine>
        </PromptLines>
      </Prompt>
      <OpenRow>
        <Label w={24}>열기</Label><Label w={5}>(</Label><Under><Label w={9}>O</Label></Under><Label w={7}>):</Label>
        <Field>
          <Label w={294}>J0039/Daily Report/Daily Report_202011040329.docx</Label>
          <Caret $h={14} $gap={0} $c="#000" />
          <Slot $w={10} $gap={8}><Chevron c="#555" s={9} w={1.1} /></Slot>
        </Field>
      </OpenRow>
      <DialogFoot>
        <Push $off><Label w={24}>확인</Label></Push>
        <Push><Label w={24}>취소</Label></Push>
        <Push $end><Label w={47}>찾아보기</Label><Label w={5}>(</Label><Under><Label w={7}>B</Label></Under><Label w={14}>)...</Label></Push>
      </DialogFoot>
    </Dialog>
  );
}

/* ---------- notifications ---------- */

const XboxToast = styled.div`
  position: absolute;
  left: 1517px;
  top: 491px;
  width: 387px;
  height: 98px;
  border-radius: 4px 0 0 4px;
  overflow: hidden;
  background: #0078d7;
`;
const XboxTop = styled.div`
  height: 66px;
  display: flex;
  align-items: center;
  padding-left: 16px;
`;
const XboxTile = styled.div`
  width: 42px;
  height: 42px;
  background: #003966;
  display: flex;
  align-items: center;
  justify-content: center;
`;
const XboxText = styled.div`
  margin: -6px 0 0 12px;
`;
const XboxLine = styled.div<{ $h: number }>`
  height: ${(p) => p.$h}px;
  display: flex;
  align-items: center;
`;
const XboxFoot = styled.div`
  height: 32px;
  background: #005a9e;
  display: flex;
  align-items: center;
  padding: 0 0 5px 20px;
`;

const Clip = styled.div<{ $y: number; $bg: string; $bar: string; $dim?: boolean }>`
  position: absolute;
  left: 1272px;
  top: ${(p) => p.$y}px;
  width: 644px;
  height: 54px;
  background: ${(p) => p.$bg};
  border-top: 1px solid ${(p) => (p.$dim ? "#777" : "#c4c4c4")};
  border-bottom: 6px solid ${(p) => p.$bar};
  padding: 8px 0 0 11px;
  display: flex;
`;
const ClipText = styled.div`
  margin: -2px 0 0 10px;
`;
const ClipLine = styled.div<{ $h: number }>`
  height: ${(p) => p.$h}px;
  display: flex;
  align-items: center;
`;
const Overlay = styled.div`
  position: absolute;
  left: 1610px;
  top: 950px;
  width: 298px;
  height: 84px;
  border-radius: 8px;
  background: rgba(70, 70, 70, 0.22);
  color: #f4f4f4;
  padding: 17px 0 0 27px;
`;
const OverlayRow = styled.div`
  height: 16px;
  display: flex;
  align-items: center;
`;
const Elephant = ({ c, w, h }: { c: string; w: number; h: number }) => (
  <svg width={w} height={h} viewBox="0 0 15 18">
    <path d="M4.5 0V3Q4.5 4.5 3 4.5H.3L4.3 .2Q9 -.8 10 1.2L13.5 2Q14.8 5 14.3 11Q14 17.5 10.5 17.5Q7 17.5 7.3 14.5Q8 12.5 10.5 13.2V14.5Q9 14.3 9 15.5T11.5 15Q11.8 12.5 9.5 11.8L8 11.3Q7.5 13 5 12.8Q1.5 12 .5 9Q-.4 7 .1 5.4H3.5Q5.4 5.2 5.4 3V.5Z" fill={c} />
    <path d="M10.8 6.6Q12 6 12.9 7.2" stroke="#fff" strokeWidth=".8" fill="none" />
  </svg>
);

const Notice = ({ y, code, bg, bar, ink, dim, sub }: { y: number; code: string; bg: string; bar: string; ink: string; dim?: boolean; sub: string }) => (
  <Clip $y={y} $bg={bg} $bar={bar} $dim={dim}>
    <Elephant c={ink} w={15} h={18} />
    <ClipText>
      <ClipLine $h={16}><Label w={570} size={12.5} medium color={dim ? "#252525" : "#333"}>{`스크랩됨: C:/RPA_Generator/Report/Sensor Code/${code}/Daily Report/Daily Report_2020110403`}</Label></ClipLine>
      <ClipLine $h={17}><Label w={32} color={sub}>215 B</Label></ClipLine>
    </ClipText>
  </Clip>
);

/* ---------- taskbar ---------- */

const Taskbar = styled.div`
  position: absolute;
  left: 0;
  top: 1040px;
  width: 1920px;
  height: 40px;
  background: #1c1c1c;
  display: flex;
`;
const Task = styled.div<{ $w?: number; $bg?: string; $line?: string }>`
  width: ${(p) => p.$w ?? 49}px;
  height: 40px;
  flex: none;
  display: flex;
  align-items: center;
  justify-content: center;
  background: ${(p) => p.$bg ?? "transparent"};
  position: relative;
  &::after {
    content: "";
    position: absolute;
    left: ${(p) => (p.$bg ? 0 : 4)}px;
    right: ${(p) => (p.$bg ? 0 : 5)}px;
    bottom: 0;
    height: 2px;
    background: ${(p) => p.$line ?? "transparent"};
  }
`;
const Tray = styled.div`
  margin-left: auto;
  display: flex;
  align-items: center;
  color: #fff;
`;
const Clock = styled.div`
  width: 68px;
  margin-left: 11px;
  padding-bottom: 1px;
  display: flex;
  flex-direction: column;
  align-items: center;
`;
const ClockLine = styled.div`
  height: 18px;
  display: flex;
  align-items: center;
`;
const Edge = styled.div`
  width: 1px;
  height: 40px;
  margin: 0 4px 0 10px;
  background: #666;
`;
const RUN = "#76b9ed";

const Office = ({ l, c1, c2, c3, c4 }: { l: string; c1: string; c2: string; c3: string; c4: string }) => (
  <svg width="24" height="22">
    <path d="M6 0H23V5.5H6Z" fill={c1} /><path d="M6 5.5H23V11H6Z" fill={c2} /><path d="M6 11H23V16.5H6Z" fill={c3} /><path d="M6 16.5H23V22H6Z" fill={c4} />
    <rect x="0" y="5" width="12" height="12" fill={c4} />
    <text x="6" y="14.5" fontSize="10" fontWeight="700" fill="#fff" textAnchor="middle" fontFamily="Open Sans">{l}</text>
  </svg>
);

function Bar() {
  return (
    <Taskbar>
      <Task $w={48}><svg width="16" height="16"><path d="M0 2.2L7 1.2V7.5H0ZM8 1L16 0V7.5H8ZM0 8.5H7V14.8L0 13.8ZM8 8.5H16V16L8 15Z" fill="#fff" /></svg></Task>
      <Task $w={50}><Slot $w={48} $lift={1}><Lens c="#fff" s={17} /></Slot></Task>
      <Task $line={RUN}>
        <svg width="22" height="19"><path d="M0 1H7L9 4H22V18H0Z" fill="#f8c64c" /><path d="M0 0H8L9 3H0Z" fill="#d99a1c" /><path d="M0 6H22V18H0Z" fill="#fcd975" /><path d="M4 19V11H18V19H14V15H8V19Z" fill="#3f97dc" /></svg>
      </Task>
      <Task $line={RUN}>
        <svg width="24" height="24"><rect width="24" height="24" fill="#fae100" /><path d="M12 4C17 4 21 7 21 11S17 18 12.5 18L8 21L8.5 17.5C5 16 3 14 3 11C3 7 7 4 12 4Z" fill="#3a2224" /><text x="12" y="13.3" fontSize="6" fontWeight="700" fill="#fae100" textAnchor="middle" fontFamily="Open Sans">TALK</text></svg>
      </Task>
      <Task $line={RUN}>
        <svg width="24" height="24"><path d="M20 5Q25 12 21 18Q17 24 9 22Q15 18 15 13Z" fill="#e6f2f5" /><path d="M3 7Q7 0 14 1Q21 2 21 8L14 13Q5 12 3 7Z" fill="#16227a" /><path d="M1 8Q4 14 11 12Q15 8 19 9Q15 12 14 16Q13 21 10 23Q-1 20 1 8Z" fill="#1ab8ae" /></svg>
      </Task>
      <Task $line={RUN}>
        <svg width="24" height="24"><path d="M2 1H21V23H2Z" fill="#f2f2f2" /><path d="M2 13H21V23H2Z" fill="#8ed82c" /><path d="M5 6V16M8 6H11M13 6H16M3 1V3M6 1V3M9 1V3M12 1V3" stroke="#333" strokeWidth="1.3" /><path d="M12 17L20 2L23 3L15 18L12 20Z" fill="#f0a224" stroke="#a05a10" strokeWidth=".6" /></svg>
      </Task>
      <Task>
        <svg width="24" height="24"><circle cx="12" cy="12" r="11" fill="#fff" /><g transform="translate(5.5 4.5) scale(.87)"><path d="M4.5 0V3Q4.5 4.5 3 4.5H.3L4.3 .2Q9 -.8 10 1.2L13.5 2Q14.8 5 14.3 11Q14 17.5 10.5 17.5Q7 17.5 7.3 14.5Q8 12.5 10.5 13.2V14.5Q9 14.3 9 15.5T11.5 15Q11.8 12.5 9.5 11.8L8 11.3Q7.5 13 5 12.8Q1.5 12 .5 9Q-.4 7 .1 5.4H3.5Q5.4 5.2 5.4 3V.5Z" fill="#14a83b" /></g></svg>
      </Task>
      <Task $bg="#a85f28" $line="#ff7a0c"><Office l="W" c1="#41a5ee" c2="#2b7cd3" c3="#185abd" c4="#103f91" /></Task>
      <Task>
        <svg width="20" height="24"><path d="M4 7Q3 0 10 0T16 7Z" fill="#f4f6f8" /><circle cx="7.5" cy="3.5" r="1" fill="#111" /><circle cx="12.5" cy="3.5" r="1" fill="#111" /><path d="M6 5.5H14L10 7.5Z" fill="#f7a81a" /><path d="M3 8H17V11H3Z" fill="#2d7fd0" /><circle cx="2.5" cy="13" r="2.5" fill="#f4f6f8" /><circle cx="17.5" cy="13" r="2.5" fill="#f4f6f8" /><path d="M3 16V21M17 16V21" stroke="#2d7fd0" strokeWidth="3" /><circle cx="10" cy="14" r="7" fill="#f7fafd" stroke="#7f93ab" strokeWidth=".8" /><path d="M7.5 9.5V16.5H14.5M5.5 11.5H12.5V18.5" stroke="#222" strokeWidth="1.4" fill="none" /><path d="M3 22.8H8.5M11.5 22.8H17" stroke="#f7a81a" strokeWidth="2" /></svg>
      </Task>
      <Task $line={RUN}>
        <svg width="20" height="24"><circle cx="9" cy="15" r="6.2" fill="none" stroke="#19ce60" strokeWidth="5" /><circle cx="17" cy="3" r="2.8" fill="#19ce60" /></svg>
      </Task>
      <Task>
        <svg width="24" height="24" viewBox="0 0 24 24"><circle cx="12" cy="12" r="11" fill="#fbc116" /><path d="M12 12L2.5 6.5A11 11 0 0 1 21.5 6.5H12Z" fill="#e33b2e" /><path d="M2.5 6.5A11 11 0 0 0 11 23L16.5 14.5H7.5Z" fill="#1fa463" /><circle cx="12" cy="12" r="5.2" fill="#fff" /><circle cx="12" cy="12" r="4.1" fill="#4688f1" /></svg>
      </Task>
      <Task $line={RUN}>
        <svg width="23" height="20"><rect x=".5" y=".5" width="22" height="18" fill="#050505" stroke="#b5b5b5" /><rect x="1" y="1" width="21" height="2.5" fill="#d8d8d8" /><text x="3" y="10" fontSize="6" fill="#fff" fontFamily="Liberation Mono">C:\_</text></svg>
      </Task>
      <Task $line={RUN}><Office l="X" c1="#33c481" c2="#21a366" c3="#185c37" c4="#107c41" /></Task>
      <Task $bg="#484848" $line={RUN}><RunIcon w={23} h={17} /></Task>
      <Tray>
        <Slot $w={14}><ChevronUp c="#fff" s={13} w={1.3} /></Slot>
        <Slot $w={16} $gap={9}>
          <svg width="16" height="16"><rect width="16" height="16" fill="#1f83e8" /><path d="M5 11A3 3 0 0 1 5 6Q6 2 9 3Q12 3.5 12.5 6Q15 7 14 10L13 11Z" fill="#fff" /><circle cx="4" cy="12" r="4" fill="#20b15a" /><path d="M2 12L3.6 13.6L6 10.5" stroke="#fff" fill="none" /></svg>
        </Slot>
        <Slot $w={16} $gap={8}>
          <svg width="16" height="13"><rect x="4.5" y="2.5" width="10" height="8" fill="none" stroke="#fff" /><rect x="6" y="4" width="7" height="5" fill="#fff" /><path d="M15.5 5V8" stroke="#fff" /><rect x="0" y="0" width="5" height="8" fill="#1c1c1c" /><path d="M1.5 0V3M3.5 0V3M.5 3H4.5V5L2.5 6.5V11.5H4" stroke="#fff" fill="none" /></svg>
        </Slot>
        <Slot $w={17} $gap={8}>
          <svg width="16" height="14"><path d="M4 .5H15.5V9.5H3M9.5 9.5V13M6 13.5H13M.5 .5H4.5V4.5H.5ZM2.5 4.5V10" fill="none" stroke="#fff" /></svg>
        </Slot>
        <Slot $w={17} $gap={7}>
          <svg width="17" height="14"><path d="M.5 4.5H3L6.5 1.5V12.5L3 9.5H.5ZM9 5Q10.5 7 9 9" fill="none" stroke="#fff" /><path d="M11.5 3.5Q14 7 11.5 10.5M14 1.5Q17.5 7 14 12.5" fill="none" stroke="#888" /></svg>
        </Slot>
        <Label gap={7} size={19} w={14}>A</Label>
        <Clock>
          <ClockLine><Label w={53}>오후 8:19</Label></ClockLine>
          <ClockLine><Label w={67}>2020-11-13</Label></ClockLine>
        </Clock>
        <Slot $w={26} $gap={18}>
          <svg width="26" height="30"><path d="M0 5H16V17H8L4 21V17H0Z" fill="#fff" /><path d="M3 8.5H13M3 11H13M3 13.5H13" stroke="#1c1c1c" /><circle cx="15.5" cy="23" r="7.5" fill="#2c2c2c" stroke="#999" /><text x="15.5" y="27.3" fontSize="12" fill="#fff" textAnchor="middle" fontFamily="Noto Sans">6</text></svg>
        </Slot>
        <Edge />
      </Tray>
    </Taskbar>
  );
}

export default function App() {
  return (
    <>
      <Global />
      <Desktop>
        <Shortcut $x={0} $y={5}><ShortcutArt><Bin /></ShortcutArt><Label w={37}>휴지통</Label></Shortcut>
        <Shortcut $x={1824} $y={5} $selected><ShortcutArt><StarArt /></ShortcutArt><Label w={44}>Develop</Label></Shortcut>
        <Shortcut $x={1824} $y={107}><ShortcutArt><NaverArrow /></ShortcutArt><Label w={68}>Naver Cloud</Label></Shortcut>
        <Shortcut $x={1823} $y={208}><ShortcutArt><TreeArt /></ShortcutArt></Shortcut>
        <FileExplorer />
        <Word />
        <XboxToast>
          <XboxTop>
            <XboxTile><svg width="16" height="15"><path d="M8 1L15 14H1ZM8 5V10M8 11V12.5" fill="none" stroke="#d4ea3a" strokeWidth="1.2" /></svg></XboxTile>
            <XboxText>
              <XboxLine $h={19}><Label w={152} size={16} color="#d9ecfb">녹화가 작동하지 않음</Label></XboxLine>
              <XboxLine $h={17}><Label w={32} size={13.5} color="#b6dcf8">오류:</Label><Label w={75} gap={3} size={13.5} color="#a6d4f7" bold>0x8232300F</Label></XboxLine>
            </XboxText>
          </XboxTop>
          <XboxFoot>
            <Label w={97} size={13.5} color="#d6eafa" bold>Xbox Game Bar</Label>
            <Label w={59} size={14} color="#d6eafa">를 열려면</Label>
            <Slot $w={15} $gap={3} $lift={4}><svg width="14" height="14"><path d="M0 2L6 1V6.5H0ZM7 1L14 0V6.5H7ZM0 7.5H6V13L0 12ZM7 7.5H14V14L7 13Z" fill="#d6eafa" /></svg></Slot>
            <Label w={22} gap={3} size={13} color="#d6eafa" bold>+ G</Label>
            <Label w={87} gap={3} size={14} color="#d6eafa">키를 누르세요</Label>
          </XboxFoot>
        </XboxToast>
        <Notice y={870} code="DGU0037" bg="#e6e6e6" bar="#58a032" ink="#0f9a2c" sub="#6c6c6c" />
        <Notice y={926} code="DGU0036" bg="#8a8a8a" bar="#42682c" ink="#17662b" dim sub="#4a4a4a" />
        <Overlay>
          <OverlayRow><Label w={62}>Transaction</Label><Label w={187} gap={10} bold>Make SensorCode Dir And Copy</Label></OverlayRow>
        </Overlay>
        <RunDialog />
        <Notice y={982} code="DGU0038" bg="#fcfcfc" bar="#5eb034" ink="#10a52e" sub="#6c6c6c" />
        <Bar />
      </Desktop>
    </>
  );
}
